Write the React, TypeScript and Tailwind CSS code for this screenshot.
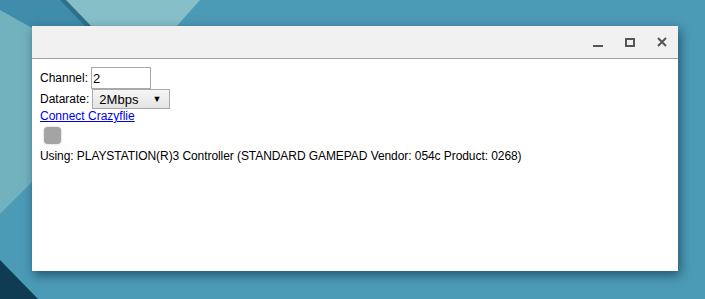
import React from "react";

const Wallpaper = () => (
  <svg className="absolute inset-0" width="705" height="299" viewBox="0 0 705 299">
    <rect width="705" height="299" fill="#4b9ab6" />
    <polygon points="0,0 66,0 92,27 0,27" fill="#3f8cab" />
    <polygon points="0,10 32,28 32,182 0,214" fill="#72b2bf" />
    <polygon points="63,0 200,0 176,27 90,27" fill="#86bfc7" />
    <polygon points="60,0 66,0 92,27 86,27" fill="#2f6f8c" />
    <polygon points="0,260 0,299 38,299" fill="#0f3c53" />
  </svg>
);

const App = () => {
  return (
    <div
      className="relative w-[705px] h-[299px] overflow-hidden"
      style={{ fontFamily: '"Liberation Sans", Arial, sans-serif' }}
    >
      <Wallpaper />
      <div className="relative ml-[32px] mt-[26px] w-[646px] h-[245px] bg-white shadow-[2px_4px_10px_rgba(0,30,50,0.55)] flex flex-col">
        <div className="h-[33px] bg-[#f1f1f1] border-b border-[#a0a0a0] flex items-center justify-end shrink-0">
          <div className="flex items-center gap-[22px] pr-[11px]">
            <div className="w-[10px] h-[10px] flex items-end">
              <div className="w-[10px] h-[2px] bg-[#555]" />
            </div>
            <div className="w-[10px] h-[9px] border-2 border-[#555]" />
            <svg width="10" height="10" viewBox="0 0 10 10">
              <path d="M1 1 L9 9 M9 1 L1 9" stroke="#555" strokeWidth="2" />
            </svg>
          </div>
        </div>
        <div className="pl-[8px] pt-[8px] text-[12px] text-black leading-none">
          <div className="flex items-center h-[22px]">
            <span>Channel:</span>
            <input
              type="text"
              defaultValue="2"
              className="ml-[3px] w-[60px] h-[22px] border border-[#a9a9a9] px-[1px] text-[13px] outline-none"
            />
          </div>
          <div className="flex items-center h-[20px]">
            <span>Datarate:</span>
            <div className="ml-[3px] w-[78px] h-[20px] border border-[#a9a9a9] bg-gradient-to-b from-[#f6f6f6] to-[#e3e3e3] flex items-center justify-between pl-[6px] pr-[8px] text-[13px]">
              <span>2Mbps</span>
              <span className="text-[9px]">▼</span>
            </div>
          </div>
          <div className="h-[14px] flex items-center">
            <a href="#" className="text-[#0000ee] underline">
              Connect Crazyflie
            </a>
          </div>
          <div className="ml-[4px] mt-[4px] w-[17px] h-[17px] rounded-[4px] bg-[#a4a4a4] shadow-[0_0_2px_rgba(0,0,0,0.3)]" />
          <div className="mt-[6px] tracking-[-0.07px]">
            Using: PLAYSTATION(R)3 Controller (STANDARD GAMEPAD Vendor: 054c Product: 0268)
          </div>
        </div>
      </div>
    </div>
  );
};

export default App;
